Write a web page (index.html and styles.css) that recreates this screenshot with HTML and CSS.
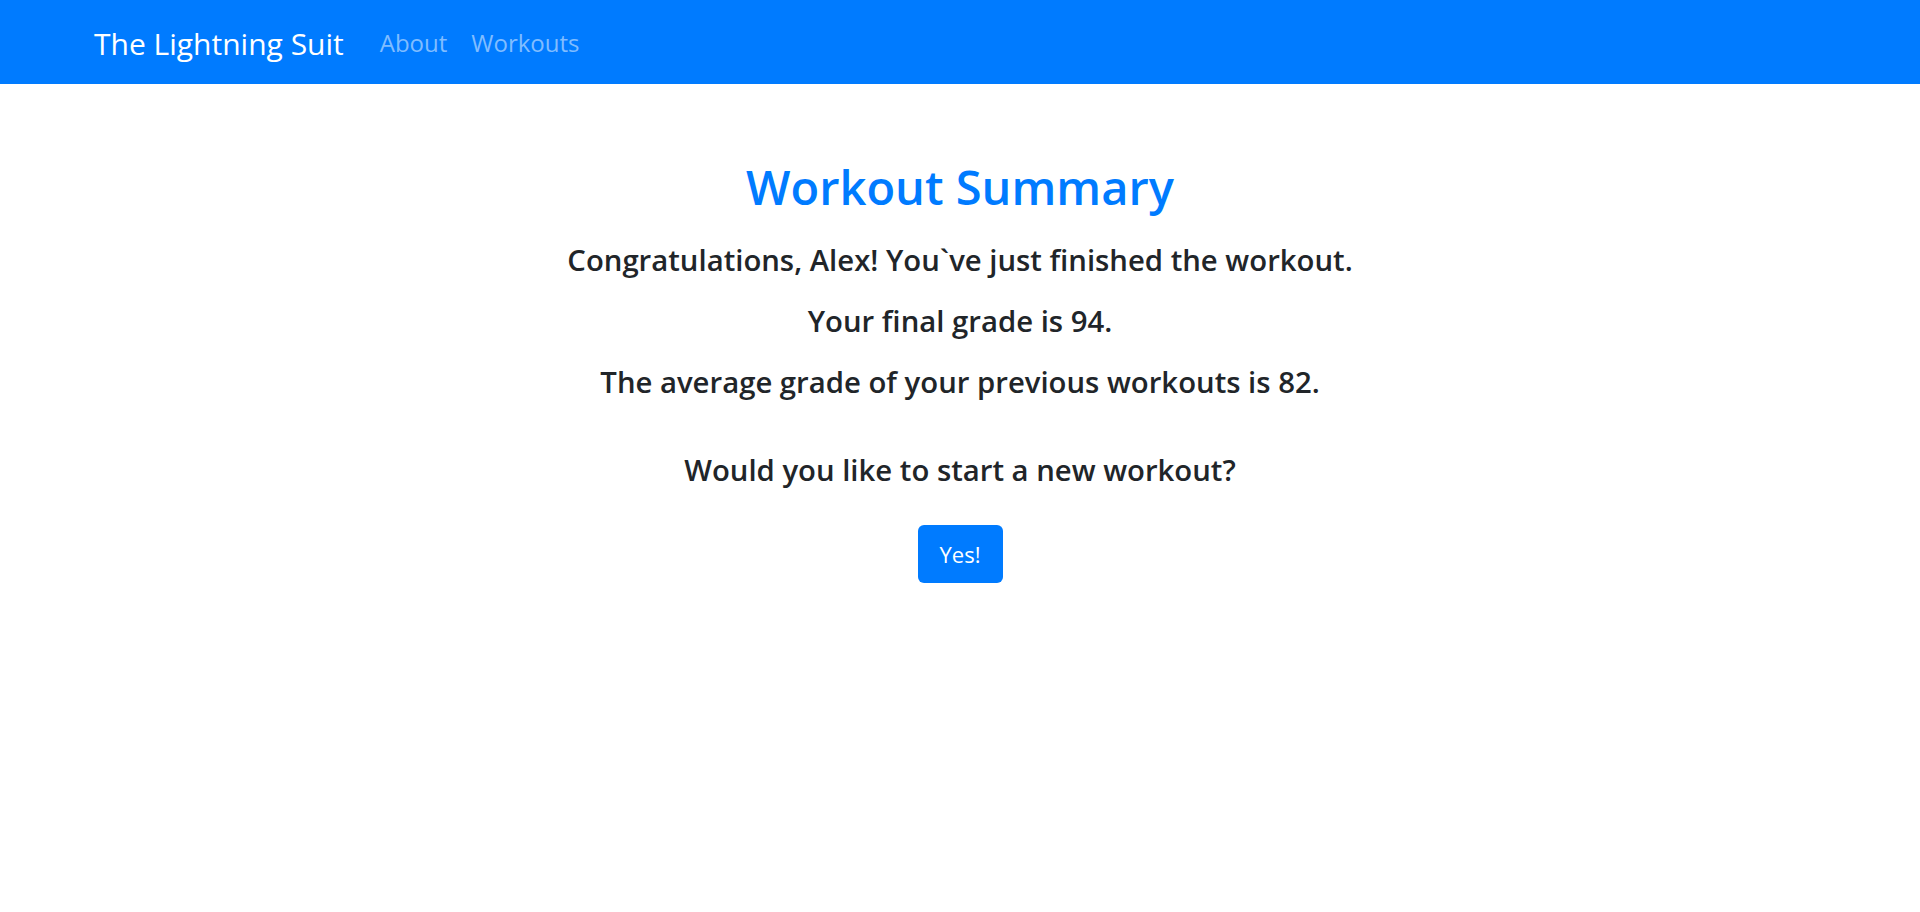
FILE: index.html
```html
<!DOCTYPE html>
<html lang="en">
<head>
<meta charset="utf-8">
<title>The Lightning Suit</title>
<link rel="stylesheet" href="styles.css">
</head>
<body>
<nav class="navbar">
  <a class="brand" href="#">The Lightning Suit</a>
  <ul class="nav">
    <li><a class="nav-link" href="#">About</a></li>
    <li><a class="nav-link" href="#">Workouts</a></li>
  </ul>
</nav>
<main class="summary">
  <h2 class="title">Workout Summary</h2>
  <p class="line">Congratulations, Alex! You`ve just finished the workout.</p>
  <p class="line">Your final grade is 94.</p>
  <p class="line">The average grade of your previous workouts is 82.</p>
  <p class="line question">Would you like to start a new workout?</p>
  <button class="btn" type="button">Yes!</button>
</main>
</body>
</html>
```

FILE: styles.css
```css
* { box-sizing: border-box; }
html, body { margin: 0; padding: 0; }
body {
  font-family: "Open Sans", "Noto Sans", sans-serif;
  color: #212529;
  background: #fff;
}
.navbar {
  display: flex;
  align-items: center;
  height: 84px;
  padding: 2px 24px 0 94px;
  background: #007bff;
}
.brand {
  color: #fff;
  text-decoration: none;
  font-size: 30px;
  line-height: 45px;
  margin-right: 24px;
}
.nav {
  display: flex;
  list-style: none;
  margin: 0;
  padding: 0;
}
.nav-link {
  display: block;
  padding: 0 12px;
  color: #80bdff;
  text-decoration: none;
  font-size: 24px;
  line-height: 36px;
}
.summary {
  display: flex;
  flex-direction: column;
  align-items: center;
  padding-top: 76px;
  text-align: center;
}
.title {
  margin: 0 0 28px;
  color: #007bff;
  font-size: 47px;
  font-weight: 600;
  line-height: 54px;
}
.line {
  margin: 0 0 25px;
  font-size: 29.3px;
  font-weight: 600;
  line-height: 36px;
}
.question {
  margin-top: 27px;
  margin-bottom: 37px;
}
.btn {
  width: 85px;
  height: 58px;
  padding: 0;
  border: 0;
  border-radius: 6px;
  background: #007bff;
  color: #fff;
  font-family: inherit;
  font-size: 22px;
  cursor: pointer;
}
```
